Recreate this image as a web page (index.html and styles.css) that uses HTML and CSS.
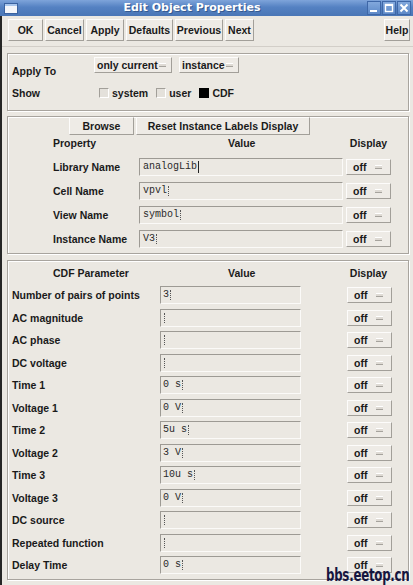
FILE: index.html
```html
<!DOCTYPE html>
<html>
<head>
<meta charset="utf-8">
<title>Edit Object Properties</title>
<link rel="stylesheet" href="styles.css">
</head>
<body>
<div class="win">
  <div class="titlebar">
    <span class="appicon"></span>
    <span class="title">Edit Object Properties</span>
    <span class="wbtns">
      <span class="wbtn"><svg width="12" height="12" viewBox="0 0 12 12"><rect x="2" y="8" width="7" height="2" fill="#fff"/></svg></span>
      <span class="wbtn"><svg width="12" height="12" viewBox="0 0 12 12"><rect x="2.5" y="2.5" width="7" height="7" fill="none" stroke="#fff" stroke-width="1.4"/><rect x="2" y="2" width="8" height="2" fill="#fff"/></svg></span>
      <span class="wbtn"><svg width="12" height="12" viewBox="0 0 12 12"><path d="M2.5 2.5 L9.5 9.5 M9.5 2.5 L2.5 9.5" stroke="#fff" stroke-width="2"/></svg></span>
    </span>
  </div>
  <div class="main">
    <div class="toolbar">
      <div class="btn w-ok">OK</div>
      <div class="btn w-cancel">Cancel</div>
      <div class="btn w-apply">Apply</div>
      <div class="btn w-def">Defaults</div>
      <div class="btn w-prev">Previous</div>
      <div class="btn w-next">Next</div>
      <div class="btn w-help">Help</div>
    </div>

    <div class="frame f1">
      <div class="arow">
        <span class="lbl alabel">Apply To</span>
        <span class="opt w-cur">only current<i class="ind"></i></span>
        <span class="opt w-inst">instance<i class="ind"></i></span>
      </div>
      <div class="srow">
        <span class="lbl slabel">Show</span>
        <span class="chk"></span><span class="ct">system</span>
        <span class="chk"></span><span class="ct">user</span>
        <span class="chk on"></span><span class="ct">CDF</span>
      </div>
    </div>

    <div class="frame f2">
      <div class="f2top">
        <div class="btn w-browse">Browse</div>
        <div class="btn w-reset">Reset Instance Labels Display</div>
      </div>
      <div class="hdr h2">
        <span class="lbl hl">Property</span>
        <span class="lbl">Value</span>
        <span class="lbl hc">Display</span>
      </div>
      <div class="prows">
        <div class="prow"><span class="lbl pl">Library Name</span><span class="fld pf">analogLib<i class="cur solid"></i></span><span></span><span class="opt dbtn">off<i class="ind"></i></span></div>
        <div class="prow"><span class="lbl pl">Cell Name</span><span class="fld pf">vpvl<i class="cur"></i></span><span></span><span class="opt dbtn">off<i class="ind"></i></span></div>
        <div class="prow"><span class="lbl pl">View Name</span><span class="fld pf">symbol<i class="cur"></i></span><span></span><span class="opt dbtn">off<i class="ind"></i></span></div>
        <div class="prow"><span class="lbl pl">Instance Name</span><span class="fld pf">V3<i class="cur"></i></span><span></span><span class="opt dbtn">off<i class="ind"></i></span></div>
      </div>
    </div>

    <div class="frame f3">
      <div class="hdr h3">
        <span class="lbl hl">CDF Parameter</span>
        <span class="lbl">Value</span>
        <span class="lbl hc">Display</span>
      </div>
      <div class="crows">
        <div class="crow"><span class="lbl">Number of pairs of points</span><span class="fld cf">3<i class="cur"></i></span><span></span><span class="opt dbtn">off<i class="ind"></i></span></div>
        <div class="crow"><span class="lbl">AC magnitude</span><span class="fld cf"><i class="cur"></i></span><span></span><span class="opt dbtn">off<i class="ind"></i></span></div>
        <div class="crow"><span class="lbl">AC phase</span><span class="fld cf"><i class="cur"></i></span><span></span><span class="opt dbtn">off<i class="ind"></i></span></div>
        <div class="crow"><span class="lbl">DC voltage</span><span class="fld cf"><i class="cur"></i></span><span></span><span class="opt dbtn">off<i class="ind"></i></span></div>
        <div class="crow"><span class="lbl">Time 1</span><span class="fld cf">0 s<i class="cur"></i></span><span></span><span class="opt dbtn">off<i class="ind"></i></span></div>
        <div class="crow"><span class="lbl">Voltage 1</span><span class="fld cf">0 V<i class="cur"></i></span><span></span><span class="opt dbtn">off<i class="ind"></i></span></div>
        <div class="crow"><span class="lbl">Time 2</span><span class="fld cf">5u s<i class="cur"></i></span><span></span><span class="opt dbtn">off<i class="ind"></i></span></div>
        <div class="crow"><span class="lbl">Voltage 2</span><span class="fld cf">3 V<i class="cur"></i></span><span></span><span class="opt dbtn">off<i class="ind"></i></span></div>
        <div class="crow"><span class="lbl">Time 3</span><span class="fld cf">10u s<i class="cur"></i></span><span></span><span class="opt dbtn">off<i class="ind"></i></span></div>
        <div class="crow"><span class="lbl">Voltage 3</span><span class="fld cf">0 V<i class="cur"></i></span><span></span><span class="opt dbtn">off<i class="ind"></i></span></div>
        <div class="crow"><span class="lbl">DC source</span><span class="fld cf"><i class="cur"></i></span><span></span><span class="opt dbtn">off<i class="ind"></i></span></div>
        <div class="crow"><span class="lbl">Repeated function</span><span class="fld cf"><i class="cur"></i></span><span></span><span class="opt dbtn">off<i class="ind"></i></span></div>
        <div class="crow"><span class="lbl">Delay Time</span><span class="fld cf">0 s<i class="cur"></i></span><span></span><span class="opt dbtn">off<i class="ind"></i></span></div>
      </div>
    </div>
  </div>
  <div class="wm">bbs.eetop.cn</div>
</div>
</body>
</html>
```

FILE: styles.css
```css
html, body {
  margin: 0;
  padding: 0;
}
body {
  width: 413px;
  height: 585px;
  overflow: hidden;
  background: #ebe8e2;
  font-family: "Liberation Sans", Arial, sans-serif;
  color: #1a1a1a;
}
.win {
  position: relative;
  width: 413px;
  height: 585px;
}

/* title bar */
.titlebar {
  height: 16px;
  display: flex;
  align-items: center;
  background: linear-gradient(#7ea4da, #5481c2 45%, #4a76b6);
}
.appicon {
  width: 12px;
  height: 7px;
  margin-left: 5px;
  background: #f4f6fa;
  border-top: 2px solid #a9c6ec;
  box-shadow: 0 0 0 1px #3a62a0;
}
.title {
  flex: 1;
  text-align: center;
  color: #fff;
  font: bold 11px "DejaVu Sans", sans-serif;
  text-shadow: 1px 1px 0 #35598f;
  line-height: 16px;
}
.wbtns {
  display: flex;
  gap: 1px;
  margin-right: 2px;
}
.wbtn {
  width: 14px;
  height: 14px;
  box-sizing: border-box;
  display: flex;
  align-items: center;
  justify-content: center;
  background: linear-gradient(#82a8dc, #5d89c8);
  border: 1px solid #3e67a7;
}

/* main area */
.main {
  height: 569px;
  border-left: 2px solid #262626;
  box-sizing: border-box;
}
.toolbar {
  height: 31px;
  box-sizing: border-box;
  padding: 3px 3px 0 6px;
  display: flex;
  align-items: flex-start;
  gap: 2px;
  border-bottom: 1px solid #d2cec8;
}
.btn {
  height: 22px;
  box-sizing: border-box;
  display: flex;
  align-items: center;
  justify-content: center;
  background: #eeebe6;
  border: 1px solid;
  border-color: #fdfcfb #a29f99 #a29f99 #fdfcfb;
  font-weight: bold;
  font-size: 10.5px;
  color: #1a1a1a;
  white-space: nowrap;
}
.w-ok { width: 35px; }
.w-cancel { width: 39px; }
.w-apply { width: 38px; }
.w-def { width: 47px; }
.w-prev { width: 48px; }
.w-next { width: 29px; }
.w-help { width: 26px; margin-left: auto; }

/* frames */
.frame {
  box-sizing: border-box;
  width: 402px;
  margin-left: 5px;
  border: 1px solid #a8a49e;
  box-shadow: inset 1px 1px 0 #fff, 1px 1px 0 #fff;
}
.f1 { height: 58px; margin-top: 6px; }
.f2 { height: 138px; margin-top: 5px; }
.f3 { height: 320px; margin-top: 6px; }

.lbl {
  font-weight: bold;
  font-size: 10.5px;
  line-height: 12px;
  white-space: nowrap;
}

/* apply row */
.arow {
  display: flex;
  align-items: flex-start;
  height: 16px;
  margin-top: 3px;
  padding-left: 4px;
}
.alabel {
  width: 82px;
  padding-top: 8px;
}
.opt {
  height: 16px;
  box-sizing: border-box;
  display: flex;
  align-items: center;
  background: #eeebe6;
  border: 1px solid;
  border-color: #fdfcfb #a29f99 #a29f99 #fdfcfb;
  font-weight: bold;
  font-size: 10.5px;
  padding-left: 2px;
  white-space: nowrap;
}
.ind {
  display: block;
  width: 7px;
  height: 2px;
  background: #dedad4;
  border-top: 1px solid #fff;
  border-bottom: 1px solid #a6a39d;
  margin-left: auto;
  margin-right: 5px;
}
.w-cur { width: 78px; }
.w-inst { width: 60px; margin-left: 7px; }

.srow {
  display: flex;
  align-items: center;
  height: 12px;
  margin-top: 14px;
  padding-left: 4px;
}
.slabel { width: 82px; }
.chk {
  width: 10px;
  height: 10px;
  box-sizing: border-box;
  margin-left: 5px;
  border: 1px solid;
  border-color: #a29f99 #fff #fff #a29f99;
  background: #e4e1db;
}
.chk.on {
  background: #000;
  border-color: #000;
}
.ct {
  font-weight: bold;
  font-size: 10.5px;
  margin-left: 3px;
  margin-right: 3px;
}

/* property frame */
.f2top {
  display: flex;
  gap: 2px;
  padding-left: 61px;
}
.w-browse { width: 65px; height: 18px; }
.w-reset { width: 174px; height: 18px; }

.hdr {
  display: grid;
  grid-template-columns: 220px 118px 45px;
  height: 12px;
}
.h2 { margin-top: 2px; }
.h3 { margin-top: 6px; }
.hl { padding-left: 45px; }
.hc { text-align: center; }

.prows {
  display: flex;
  flex-direction: column;
  gap: 6px;
  margin-top: 9px;
}
.prow {
  display: grid;
  grid-template-columns: 131px 204px 3px 45px;
  align-items: center;
  height: 18px;
}
.pl { padding-left: 45px; }

.fld {
  height: 18px;
  box-sizing: border-box;
  border: 1px solid;
  border-color: #9d9a94 #fbfaf8 #fbfaf8 #9d9a94;
  background: #ebe8e2;
  font: 10px "Liberation Mono", "Courier New", monospace;
  line-height: 12px;
  padding-top: 2px;
  color: #2a2a2a;
  white-space: nowrap;
  display: flex;
  align-items: flex-start;
}
.pf { padding-left: 3px; }
.cf { padding-left: 2px; }
.cur {
  display: block;
  width: 0;
  height: 10px;
  margin-left: 1px;
  margin-top: 1px;
  border-left: 1px dotted #555;
}
.cur.solid {
  height: 12px;
  margin-top: 0;
  border-left: 1px solid #222;
  box-shadow: -2px 0 0 -1px #222;
}
.dbtn {
  width: 45px;
  padding-left: 6px;
}
.dbtn .ind { margin-right: 8px; }

/* cdf frame */
.crows {
  margin-top: 4.75px;
  display: grid;
  grid-auto-rows: 22.5px;
}
.crow {
  display: grid;
  grid-template-columns: 152px 141px 46px 45px;
  align-items: center;
}
.crow > .lbl:first-child { padding-left: 4px; }

/* watermark */
.wm {
  position: absolute;
  right: 3px;
  bottom: 0;
  font: bold 17px "DejaVu Sans Condensed", "DejaVu Sans", sans-serif;
  line-height: 19px;
  color: #15153f;
  transform: scaleX(0.77);
  transform-origin: right bottom;
  letter-spacing: -0.3px;
}
```
